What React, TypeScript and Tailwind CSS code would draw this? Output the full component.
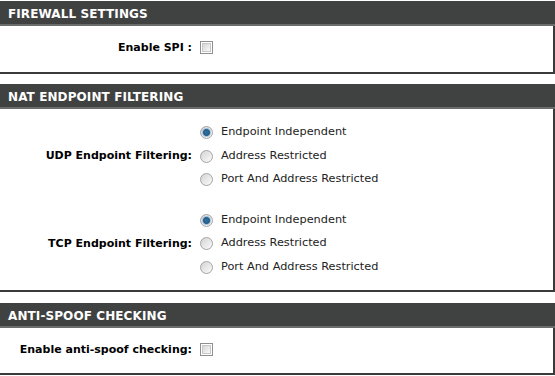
const font = { fontFamily: '"DejaVu Sans", Verdana, sans-serif' };

function Header({ title }: { title: string }) {
  return (
    <div className="h-[25px] bg-[#404242] border-b-2 border-[#6b6d6d] flex items-center pl-[8px] pt-[2px]">
      <span className="text-white font-bold text-[12px] tracking-[0.1px]">{title}</span>
    </div>
  );
}

function Checkbox() {
  return (
    <div className="w-[13px] h-[13px] border border-[#8f8f8f] bg-white p-px">
      <div className="w-full h-full border border-[#c8c8c8] bg-gradient-to-br from-[#d6d6d6] to-[#fafafa]" />
    </div>
  );
}

function Radio({ checked }: { checked?: boolean }) {
  return (
    <div className="w-[13px] h-[13px] rounded-full border border-[#a4a4a4] bg-gradient-to-br from-[#d4d4d4] to-[#fbfbfb] flex items-center justify-center">
      {checked && <div className="w-[7px] h-[7px] rounded-full bg-[#2c6a99] border border-[#1d4d73] shadow-[0_0_0_1px_#9cc0dc]" />}
    </div>
  );
}

function RadioGroup({ label }: { label: string }) {
  const options = ["Endpoint Independent", "Address Restricted", "Port And Address Restricted"];
  return (
    <div className="flex items-center">
      <div className="w-[193px] text-right font-bold text-[11px] text-black pr-[1px]">{label}</div>
      <div className="flex flex-col pl-[7px]">
        {options.map((o, i) => (
          <div key={o} className="h-[23.5px] flex items-center gap-[8px]">
            <Radio checked={i === 0} />
            <span className="text-[11.3px] text-[#222]">{o}</span>
          </div>
        ))}
      </div>
    </div>
  );
}

export default function App() {
  return (
    <div className="w-[555px] h-[376px] bg-white pt-px" style={font}>
      {/* Firewall */}
      <Header title="FIREWALL SETTINGS" />
      <div className="h-[48px] border-b-2 border-r-2 border-[#3a3a3a] flex items-start pt-[14px]">
        <div className="w-[193px] text-right font-bold text-[11px] text-black pr-[1px]">Enable SPI :</div>
        <div className="pl-[7px] pt-px">
          <Checkbox />
        </div>
      </div>

      <div className="h-[10px]" />

      {/* NAT */}
      <Header title="NAT ENDPOINT FILTERING" />
      <div className="h-[183px] border-b-2 border-r-2 border-[#3a3a3a] pt-[12px] flex flex-col gap-[17px]">
        <RadioGroup label="UDP Endpoint Filtering:" />
        <RadioGroup label="TCP Endpoint Filtering:" />
      </div>

      <div className="h-[11px]" />

      {/* Anti-spoof */}
      <Header title="ANTI-SPOOF CHECKING" />
      <div className="h-[47px] border-b-2 border-r-2 border-[#3a3a3a] flex items-start pt-[14px]">
        <div className="w-[193px] text-right font-bold text-[11px] text-black pr-[1px]">Enable anti-spoof checking:</div>
        <div className="pl-[7px] pt-px">
          <Checkbox />
        </div>
      </div>
    </div>
  );
}
